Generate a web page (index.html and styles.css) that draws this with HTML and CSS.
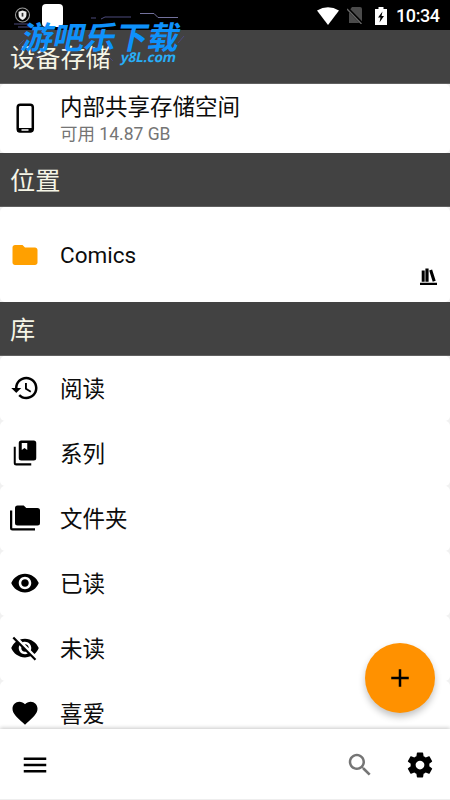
FILE: index.html
```html
<!DOCTYPE html>
<html lang="zh-CN">
<head>
<meta charset="utf-8">
<title>设备存储</title>
<link rel="stylesheet" href="styles.css">
</head>
<body>
<div class="app">
  <header class="status">
    <div class="status-left">
      <svg class="shield" viewBox="0 0 16 16"><circle cx="8" cy="8" r="6.6" fill="none" stroke="#999" stroke-width="1"/><path d="M8 3.8l3.7 1.1v3c0 2.2-1.8 3.8-3.7 4.7-1.900-.9-3.700-2.500-3.700-4.700v-3z" fill="#eee"/><path d="M8 6v3.500" stroke="#333" stroke-width="1.600"/></svg>
      <span class="app-tile"></span>
    </div>
    <div class="status-right">
      <svg class="wifi" viewBox="0 0 22 18"><path d="M0 3.500Q11-3 22 3.500L11 18z" fill="#fff"/></svg>
      <svg class="sim" viewBox="0 0 16 17"><path d="M5 0h8q2 0 2 2v14H2V4z" fill="#4b4b4b"/><path d="M0 1l15.500 16" stroke="#000" stroke-width="3"/><path d="M0 2l14.500 15" stroke="#696969" stroke-width="1.300"/></svg>
      <svg class="battery" viewBox="0 0 12 18"><path d="M3.500 0h5v2H12v16H0V2h3.500z" fill="#fff"/><path d="M7.500 4.500L3 10.500h2.500L4.500 15.500 9 9H6.500z" fill="#000"/></svg>
      <span class="clock">10:34</span>
    </div>
  </header>

  <main class="content">
    <h2 class="section">设备存储</h2>
    <div class="row storage">
      <svg class="icon" viewBox="0 0 30 30"><rect x="7.700" y="1.700" width="15.100" height="26.600" rx="2.600" fill="none" stroke="#000" stroke-width="2.500"/><path d="M7 25h16v2.500q0 2-2 2H9q-2 0-2-2z"/><path d="M11.500 27h7" stroke="#fff" stroke-width="1.500"/></svg>
      <div class="texts"><span class="label">内部共享存储空间</span><span class="sub">可用 14.87 GB</span></div>
    </div>
    <h2 class="section">位置</h2>
    <div class="row comics">
      <svg class="icon" viewBox="0 0 24 24"><path fill="#ffa000" d="M10 4H4c-1.100 0-1.990.9-1.990 2L2 18c0 1.100.9 2 2 2h16c1.100 0 2-.9 2-2V8c0-1.100-.9-2-2-2h-8l-2-2z"/></svg>
      <span class="label">Comics</span>
      <svg class="books" viewBox="0 0 17 18"><path d="M0 14.800h17V17H0zM1.700 2.500h3v11.200h-3zM5.400.6h3.200v13.100H5.400zM9.200 2.400l2.900-.8 3.600 11.200-3 .9z"/></svg>
    </div>
    <h2 class="section last">库</h2>
    <div class="row"><svg class="icon" viewBox="0 0 24 24"><path d="M13 3c-4.970 0-9 4.030-9 9H1l3.890 3.890.07.14L9 12H6c0-3.870 3.130-7 7-7s7 3.130 7 7-3.130 7-7 7c-1.930 0-3.680-.79-4.940-2.060l-1.420 1.420C8.270 19.990 10.510 21 13 21c4.970 0 9-4.030 9-9s-4.030-9-9-9zm-1 5v5l4.280 2.540.72-1.210-3.500-2.080V8H12z"/></svg><span class="label">阅读</span></div>
    <div class="row"><svg class="icon" viewBox="0 0 24 24"><path fill-rule="evenodd" d="M4.600 7H3v13q0 2 2 2h12v-1.800H4.600zM9 2h10q2 0 2 2v12q0 2-2 2H9q-2 0-2-2V4q0-2 2-2zM9.400 4v5.500l2.200-1.500 2.200 1.500V4z"/></svg><span class="label">系列</span></div>
    <div class="row"><svg class="icon" viewBox="0 0 24 24"><path d="M1.800 6H0v14q0 2 2 2h18v-1.800H1.800zM6 2h5l2 2h9q2 0 2 2v10q0 2-2 2H6q-2 0-2-2V4q0-2 2-2z"/></svg><span class="label">文件夹</span></div>
    <div class="row"><svg class="icon" viewBox="0 0 24 24"><path d="M12 4.500C7 4.500 2.730 7.610 1 12c1.730 4.390 6 7.500 11 7.500s9.270-3.110 11-7.500c-1.730-4.390-6-7.500-11-7.500zM12 17c-2.760 0-5-2.240-5-5s2.240-5 5-5 5 2.240 5 5-2.240 5-5 5zm0-8c-1.660 0-3 1.340-3 3s1.340 3 3 3 3-1.340 3-3-1.340-3-3-3z"/></svg><span class="label">已读</span></div>
    <div class="row"><svg class="icon" viewBox="0 0 24 24"><path d="M12 7c2.760 0 5 2.240 5 5 0 .65-.13 1.260-.36 1.830l2.920 2.920c1.510-1.260 2.700-2.890 3.430-4.750-1.730-4.390-6-7.500-11-7.500-1.400 0-2.740.25-3.980.7l2.160 2.160C10.740 7.130 11.350 7 12 7zM2 4.270l2.280 2.280.46.46C3.080 8.300 1.780 10.020 1 12c1.730 4.390 6 7.500 11 7.500 1.550 0 3.030-.3 4.380-.84l.42.42L19.730 22 21 20.730 3.270 3 2 4.270zM7.530 9.800l1.550 1.550c-.05.21-.08.43-.08.65 0 1.660 1.340 3 3 3 .22 0 .44-.03.65-.08l1.550 1.550c-.67.33-1.410.53-2.200.53-2.760 0-5-2.240-5-5 0-.79.2-1.530.53-2.200zm4.310-.78l3.150 3.150.02-.16c0-1.660-1.340-3-3-3l-.17.01z"/></svg><span class="label">未读</span></div>
    <div class="row"><svg class="icon" viewBox="0 0 24 24"><path d="M12 21.350l-1.450-1.320C5.400 15.360 2 12.280 2 8.500 2 5.420 4.420 3 7.500 3c1.740 0 3.410.81 4.500 2.090C13.090 3.810 14.760 3 16.500 3 19.580 3 22 5.420 22 8.500c0 3.780-3.400 6.860-8.550 11.540L12 21.350z"/></svg><span class="label">喜爱</span></div>
  </main>

  <nav class="bar">
    <svg class="icon" viewBox="0 0 24 24"><path d="M3 18h18v-2H3v2zm0-5h18v-2H3v2zm0-7v2h18V6H3z"/></svg>
    <span class="spacer"></span>
    <svg class="icon search" viewBox="0 0 24 24"><path d="M15.500 14h-.79l-.28-.27C15.410 12.590 16 11.110 16 9.500 16 5.910 13.090 3 9.500 3S3 5.910 3 9.500 5.910 16 9.500 16c1.610 0 3.090-.59 4.230-1.570l.27.28v.79l5 4.990L20.490 19l-4.990-5zm-6 0C7.010 14 5 11.990 5 9.500S7.010 5 9.500 5 14 7.010 14 9.500 11.990 14 9.500 14z"/></svg>
    <svg class="icon" viewBox="0 0 24 24"><path d="M19.430 12.980c.04-.32.07-.64.07-.98s-.03-.66-.07-.98l2.110-1.650c.19-.15.24-.42.12-.64l-2-3.460c-.12-.22-.39-.3-.61-.22l-2.490 1c-.52-.4-1.080-.73-1.690-.98l-.38-2.650C14.460 2.180 14.250 2 14 2h-4c-.25 0-.46.18-.49.42l-.38 2.650c-.61.25-1.170.59-1.690.98l-2.490-1c-.23-.09-.49 0-.61.22l-2 3.460c-.13.22-.07.49.12.64l2.110 1.650c-.04.32-.07.65-.07.98s.03.66.07.98l-2.110 1.650c-.19.15-.24.42-.12.64l2 3.460c.12.22.39.3.61.22l2.490-1c.52.4 1.080.73 1.690.98l.38 2.650c.03.24.24.42.49.42h4c.25 0 .46-.18.49-.42l.38-2.650c.61-.25 1.170-.59 1.690-.98l2.490 1c.23.09.49 0 .61-.22l2-3.460c.12-.22.07-.49-.12-.64l-2.110-1.650zM12 15.500c-1.930 0-3.500-1.570-3.500-3.500s1.570-3.500 3.500-3.500 3.500 1.570 3.500 3.500-1.570 3.500-3.500 3.500z"/></svg>
  </nav>

  <button class="fab" aria-label="+"><svg class="icon" viewBox="0 0 24 24"><path d="M19 13h-6v6h-2v-6H5v-2h6V5h2v6h6v2z"/></svg></button>

  <div class="watermark">
    <svg class="circuit" viewBox="0 0 190 70" fill="none" stroke="#4c4a7c" stroke-width="1"><path d="M14 24h14M18 27h12M91 18h5M101 19l4-2h26" /><path d="M140 13.500h14l4 4h20" stroke="#73719d"/><path d="M113 61l-4-4M178 43l6-7M24 40l-5 5M34 58l6-3" /></svg>
    <span class="mark-name">游吧乐下载</span>
    <span class="mark-url">y8L.com</span>
  </div>
</div>
</body>
</html>
```
FILE: styles.css
```css
* { box-sizing: border-box; }
body { margin: 0; background: #fff; font-family: Roboto, "Noto Sans CJK SC", sans-serif; }
.app { position: relative; display: flex; flex-direction: column; width: 450px; height: 800px; overflow: hidden; }

.status { display: flex; flex: none; justify-content: space-between; height: 30px; background: #000; color: #fff; }
.status-left { display: flex; gap: 11px; padding: 4px 0 0 14px; }
.shield { width: 17px; height: 22px; }
.app-tile { width: 21px; height: 23px; border-radius: 4px; background: #fff; }
.status-right { display: flex; align-items: center; padding: 1px 10px 0 0; }
.wifi { width: 22px; height: 18px; margin-right: 8px; }
.sim { width: 16px; height: 17px; margin-right: 12px; }
.battery { width: 12px; height: 18px; margin-right: 9px; }
.clock { font-size: 18px; font-weight: 500; line-height: 28px; width: 44px; letter-spacing: -.4px; }

.content { flex: 1; min-height: 0; overflow: hidden; background: #f1f1f1; }
.section { height: 54px; margin: 0; padding-left: 10px; background: #424242; color: #f5f5e6; font-size: 25.200px; font-weight: 400; line-height: 58px; border-bottom: 1px solid #606060; }
.section.last { height: 53.500px; line-height: 57px; }
.row { display: flex; align-items: center; height: 65px; padding: 0 13px 0 10px; gap: 20px; background: #fff; border-radius: 5px; }
.row.storage { height: 69px; }
.row.comics { height: 95px; }
.icon { display: block; flex: none; width: 30px; height: 30px; }
.storage .icon { margin-bottom: 2px; }
.label { padding-top: 2px; font-size: 22.500px; line-height: 30px; color: #0c0c0c; }
.comics .label { padding-top: 0; }
.texts { display: flex; flex-direction: column; }
.texts .label { line-height: 29px; }
.sub { font-size: 17.500px; line-height: 24px; color: #757575; }
.books { align-self: flex-end; width: 17px; height: 18px; margin: 0 0 16px auto; }

.bar { position: relative; display: flex; flex: none; align-items: center; height: 71px; padding: 2px 15px 0 20px; background: #fff; border-bottom: 1px solid #eee; box-shadow: 0 -1px 4px rgba(0,0,0,.22); }
.spacer { flex: 1; }
.search { margin-right: 30px; fill: #757575; }

.fab { position: absolute; right: 15px; bottom: 87px; display: flex; align-items: center; justify-content: center; width: 70px; height: 70px; padding: 0; border: 0; border-radius: 50%; background: #ff9100; box-shadow: 0 4px 7px rgba(0,0,0,.24); }

.watermark { position: absolute; left: 0; top: 0; width: 190px; height: 70px; pointer-events: none; }
.circuit { position: absolute; inset: 0; }
.mark-name { position: absolute; left: 23px; top: 19px; font: 700 31.500px/32px "Noto Sans CJK SC", sans-serif; color: #0e91fb; white-space: nowrap; transform: skewX(-12deg); }
.mark-url { position: absolute; left: 121px; top: 48px; font: 700 13.500px/18px "Noto Sans", sans-serif; color: #28aef8; transform: skewX(-12deg); }
```
